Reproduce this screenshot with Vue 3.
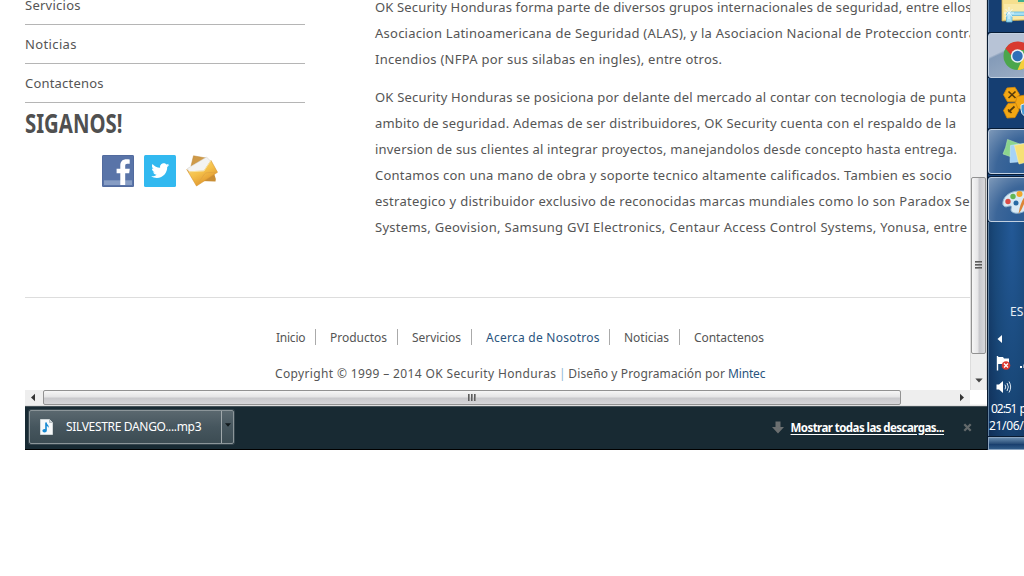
<script setup>
const sideLinks = [
  { text: 'Servicios', w: 55.5 },
  { text: 'Noticias', w: 51.5 },
  { text: 'Contactenos', w: 78.5 },
]
const paragraphs = [
  [
    { text: 'OK Security Honduras forma parte de diversos grupos internacionales de seguridad, entre ellos', w: 596.5 },
    { text: 'Asociacion Latinoamericana de Seguridad (ALAS), y la Asociacion Nacional de Proteccion contra', w: 601 },
    { text: 'Incendios (NFPA por sus silabas en ingles), entre otros.', w: 347 },
  ],
  [
    { text: 'OK Security Honduras se posiciona por delante del mercado al contar con tecnologia de punta', w: 591 },
    { text: 'ambito de seguridad. Ademas de ser distribuidores, OK Security cuenta con el respaldo de la', w: 581 },
    { text: 'inversion de sus clientes al integrar proyectos, manejandolos desde concepto hasta entrega.', w: 582 },
    { text: 'Contamos con una mano de obra y soporte tecnico altamente calificados. Tambien es socio', w: 577 },
    { text: 'estrategico y distribuidor exclusivo de reconocidas marcas mundiales como lo son Paradox Se', w: 594.5 },
    { text: 'Systems, Geovision, Samsung GVI Electronics, Centaur Access Control Systems, Yonusa, entre', w: 592 },
  ],
]
const footLinks = [
  { text: 'Inicio', w: 29.5, cell: 40 },
  { text: 'Productos', w: 57, cell: 82 },
  { text: 'Servicios', w: 49, cell: 74 },
  { text: 'Acerca de Nosotros', w: 113.5, cell: 138, blue: true },
  { text: 'Noticias', w: 45, cell: 70 },
  { text: 'Contactenos', w: 70, cell: 84 },
]

// Tracks a run of text out to the given width.
const vFit = {
  mounted(el, { value }) {
    const natural = el.getBoundingClientRect().width
    el.style.letterSpacing = (value - natural) / (el.textContent.length - 1) + 'px'
  },
}
// Condenses a run of text to the given width.
const vCondense = {
  mounted(el, { value }) {
    el.style.transform = `scaleX(${value / el.getBoundingClientRect().width})`
  },
}
</script>

<template>
  <div class="desktop">
    <div class="browser">
      <div class="viewport">
        <main class="content">
          <div class="columns">
            <aside class="side">
              <div v-for="l in sideLinks" :key="l.text" class="side-link"><span v-fit="l.w">{{ l.text }}</span></div>
              <h2><span v-condense="97.5">SIGANOS!</span></h2>
              <div class="social">
                <svg width="32" height="32" viewBox="0 0 32 32">
                  <rect width="32" height="32" rx="1.5" fill="#5974a8" />
                  <rect x=".5" y=".5" width="31" height="31" rx="1" fill="none" stroke="#526b9e" />
                  <rect x="2" y="25.3" width="28" height="4.7" fill="#879dc4" />
                  <path d="M18.3 30V18.2h-3.7v-4.5h3.7v-3.2c0-4.2 2.5-6.2 6.2-6.2 1.2 0 2.3.1 3.2.2v4.3h-2.3c-1.7 0-2.2.8-2.2 2.2v2.7h4.6l-.6 4.5h-4V30z" fill="#fff" />
                </svg>
                <svg width="32" height="32" viewBox="0 0 32 32">
                  <rect width="32" height="32" rx="1.5" fill="#32b9f0" />
                  <path transform="translate(6.6 6.2) scale(.79)" d="M23.6 4.9c-.8.4-1.700.6-2.700.8 1-.6 1.700-1.500 2.100-2.600-.9.5-1.900.9-3 1.100-.8-.9-2-1.500-3.400-1.500-3 0-5.200 2.800-4.500 5.700C8.200 8.200 4.700 6.300 2.400 3.500c-1.300 2.100-.6 4.900 1.400 6.300-.8 0-1.500-.2-2.100-.6-.1 2.200 1.500 4.200 3.700 4.700-.7.200-1.400.2-2.100.1.600 1.800 2.300 3.200 4.300 3.200-2 1.500-4.400 2.200-6.900 1.900 2.100 1.300 4.500 2.100 7.100 2.100 8.600 0 13.500-7.300 13.200-13.800 1-.6 1.900-1.500 2.600-2.500z" fill="#fff" />
                </svg>
                <svg width="32" height="32" viewBox="0 0 32 32">
                  <defs>
                    <linearGradient id="gold" x1="0" y1="0" x2=".6" y2="1">
                      <stop offset="0" stop-color="#ffe07a" /><stop offset=".55" stop-color="#f4c04a" /><stop offset="1" stop-color="#df922a" />
                    </linearGradient>
                  </defs>
                  <path d="M7.500.8 20 3 5 11z" fill="#cf9a48" stroke="#bd883a" stroke-width=".5" />
                  <path d="m27 15 2.800 9-.3 2.500L15 26z" fill="#c98e35" />
                  <path d="M1.500 13.500 20.500 2l4.500 4.500-6.500 11L3 18z" fill="#f3f3f3" stroke="#cfcac1" stroke-width=".5" />
                  <path d="M.8 14.500 3 16.800l15-.8L25 5.500l6.500 11.800L10.500 31z" fill="url(#gold)" stroke="#d69530" stroke-width=".6" />
                  <path d="m3 16.800 15-.8L25 5.500" fill="none" stroke="#fff0ae" stroke-width=".8" />
                  <path d="m10.500 30.500 8-11.500q1-1.200 3-1.300l9.500-.4" fill="none" stroke="#dfa440" stroke-width=".7" />
                </svg>
              </div>
            </aside>
            <section class="article">
              <p v-for="(p, i) in paragraphs" :key="i">
                <span v-for="l in p" :key="l.text" class="line"><span v-fit="l.w">{{ l.text }}</span></span>
              </p>
            </section>
          </div>
          <footer>
            <nav>
              <div v-for="l in footLinks" :key="l.text" class="foot-link" :class="{ blue: l.blue }" :style="{ width: l.cell + 'px' }">
                <span v-fit="l.w">{{ l.text }}</span>
              </div>
            </nav>
            <div class="copy">
              <span v-fit="281">Copyright © 1999 – 2014 OK Security Honduras</span>
              <i>|</i>
              <span v-fit="156.5">Diseño y Programación por</span>
              <b><span v-fit="37.5">Mintec</span></b>
            </div>
          </footer>
        </main>
        <div class="vscroll">
          <div class="vthumb"><i></i><i></i><i></i></div>
          <svg class="down" width="8" height="5" viewBox="0 0 8 5"><path d="M.3.5h7.400L4 4.500z" fill="#444" /></svg>
        </div>
      </div>
      <div class="hrow">
        <div class="hscroll">
          <svg width="18" height="15" viewBox="0 0 18 15"><path d="M10 3.800v7.400L6 7.500z" fill="#333" /></svg>
          <div class="hthumb"><i></i><i></i><i></i></div>
          <svg class="right" width="16" height="15" viewBox="0 0 16 15"><path d="M6 3.800v7.400l4-3.700z" fill="#333" /></svg>
        </div>
      </div>
      <div class="downloads">
        <div class="item">
          <div class="file">
            <svg width="13" height="16" viewBox="0 0 13 16">
              <path d="M.5.500h9l3 3v12H.5z" fill="#f7f9fa" stroke="#cfd6d8" /><path d="M9.500.500v3h3" fill="#cad2d6" stroke="#9faaae" stroke-width=".7" />
              <path d="M6 3.500v8" stroke="#1689d2" stroke-width="1.600" /><path d="M6 3.300c.5 2 3.300 2.500 2.700 5.700-.5-1.500-1.500-2-2.700-2.300z" fill="#1689d2" /><ellipse cx="4.600" cy="11.700" rx="2.200" ry="1.800" fill="#1689d2" />
            </svg>
            <span v-fit="135.500">SILVESTRE DANGO....mp3</span>
          </div>
          <div class="drop"><svg width="6" height="4" viewBox="0 0 6 4"><path d="M0 .3h6L3 3.700z" fill="#11191c" /></svg></div>
        </div>
        <div class="all">
          <svg width="12" height="13" viewBox="0 0 12 13"><path d="M3.500.500h5V6H12l-6 6.500L0 6h3.500z" fill="#6b6f70" /></svg>
          <span v-fit="154">Mostrar todas las descargas...</span>
          <svg class="close" width="9" height="9" viewBox="0 0 9 9"><path d="m1.300 1.300 6.400 6.400m0-6.400L1.300 7.700" stroke="#63696b" stroke-width="2.300" /></svg>
        </div>
      </div>
    </div>

    <div class="taskbar">
      <div class="task plain first">
        <svg width="36" height="33" viewBox="0 0 36 33">
          <path d="M13-2h23v22l-23 1z" fill="#f6df8e" stroke="#c9a74e" stroke-width=".8" />
          <path d="M29-1h7v3h-7z" fill="#42ad8c" /><path d="M15 4h21v15H15z" fill="#fae9a7" />
          <path d="M17.500 22V14q0-2 2-2H36v3.500H23V22z" fill="#a5dff3" stroke="#5db5dc" stroke-width=".8" />
          <path d="M20 7v12m-5-6h10m-8.500-4 7 8m0-8-7 8" stroke="#f2fcff" stroke-width=".8" />
        </svg>
      </div>
      <div class="task active chrome">
        <svg width="36" height="44" viewBox="0 0 36 44">
          <circle cx="28.500" cy="22" r="14" fill="#4ca64c" />
          <path d="M16.500 14.500A14 14 0 0 1 41.500 16h-13l-6.500 5z" fill="#d83a30" />
          <path d="m28.500 36 7-16h7a14 14 0 0 1-14 16z" fill="#f6ce3a" />
          <circle cx="28.500" cy="22" r="6.700" fill="#eef3f4" /><circle cx="28.500" cy="22" r="5.200" fill="#2f70b8" />
        </svg>
      </div>
      <div class="task plain hex">
        <svg width="36" height="50" viewBox="0 0 36 50">
          <g fill="#f3a714" stroke="#d98a09" stroke-width=".8">
            <path d="m18 10 8-.7 4.500 7.200-4 7.300h-8l-4-7z" /><path d="m19 25.500 8-.5 3 7-4 7.500-8 .5-3.500-7.500z" /><path d="m28 18.500 8-1.500v14l-7-.5-2.500-6z" />
          </g>
          <path d="m19.500 13.500 7 6.500m0-6.500-7 6.500m0 14 6-5.500m-6.500 3 3.500 3.500" stroke="#573b0a" stroke-width="1.700" />
          <path d="m32 27 4-1.500v13q-4-2.500-4-7z" fill="#4599d5" stroke="#e8f0f4" />
        </svg>
      </div>
      <div class="task active notes">
        <svg width="36" height="44" viewBox="0 0 36 44">
          <path d="m18.500 9.500 13.500 5-5 14-13-4.500q3-6 4.500-14.500z" fill="#8bd48d" stroke="#b2e5ad" stroke-width=".6" />
          <path d="m21.500 15.500 13-2 1 18-14.500 1z" fill="#a6d3f7" stroke="#c6e5fb" stroke-width=".6" />
          <path d="m25.500 15.500 10.500-2v19l-6 1.500z" fill="#f6e075" stroke="#fff0a2" stroke-width=".6" />
        </svg>
      </div>
      <div class="task active paint">
        <svg width="36" height="44" viewBox="0 0 36 44">
          <path d="M14 27c-1.500-7 6-14 16-14h6v20c-7 4-14 2-14-1 0-2.500 1.500-4-1-4-3 0-4 2.500-7-1z" fill="#d9eaf4" stroke="#90b5cf" />
          <circle cx="19" cy="23.500" r="2.700" fill="#da4c46" /><circle cx="24" cy="18.500" r="2.700" fill="#63b755" /><circle cx="30.500" cy="16" r="3" fill="#f1a62d" /><circle cx="27" cy="25" r="2.500" fill="#286ba4" />
          <path d="M36 18q-5 7-6.500 18 4-5 6.500-13z" fill="#dd8537" />
        </svg>
      </div>
      <div class="tray">
        <div class="lang">ES</div>
        <svg class="more" width="6" height="8" viewBox="0 0 6 8"><path d="M5 0v8L.5 4z" fill="#fff" /></svg>
        <svg class="flag" width="30" height="17" viewBox="0 0 30 17">
          <path d="M1.500 1v14.500" stroke="#fff" stroke-width="1.400" /><path d="M2 2h5l1 1.500h5v7H8L7 9H2z" fill="#fff" />
          <circle cx="10" cy="10.500" r="4.300" fill="#dc3931" /><path d="m8 8.500 4 4m0-4-4 4" stroke="#fff" stroke-width="1.300" />
          <path d="M24 11h2v2h-2zm3.500-1.500H29V13h-1.500z" fill="#fff" />
        </svg>
        <svg class="sound" width="16" height="14" viewBox="0 0 16 14">
          <path d="M.5 4.500H3L7 1v12L3 9.500H.5z" fill="#fff" /><path d="M9 4.700q1.500 2.300 0 4.600m2-6.300q2.700 4 0 8m2-9.500q3.300 5.500 0 11" fill="none" stroke="#d9e5ef" />
        </svg>
        <div class="clock"><span v-fit="26.5">02:51</span>&nbsp;<span>p.m.</span></div>
        <div class="date"><span v-fit="61">21/06/2014</span></div>
      </div>
      <div class="peek"></div>
    </div>
  </div>
</template>

<style>
html, body { background: #fff; overflow: hidden; }
</style>

<style scoped>
* { box-sizing: border-box; }
svg { display: block; flex: none; }
span { display: inline-block; white-space: nowrap; }
.desktop { display: flex; width: 1024px; height: 450px; padding-left: 25px; overflow: hidden; font-family: "Noto Sans", "Open Sans", sans-serif; }
.browser { width: 962px; flex: none; display: flex; flex-direction: column; }
.viewport { display: flex; height: 390px; }
.content { width: 945px; flex: none; height: 390px; overflow: hidden; color: #555; }
.columns { display: flex; gap: 70px; height: 297px; font-size: 13px; }
.side { width: 280px; flex: none; margin-top: -14px; }
.side-link { height: 39px; line-height: 38px; border-bottom: 1px solid #b5b5b5; }
h2 { margin: 0; height: 41px; line-height: 39px; font-size: 27px; font-weight: 700; color: #505050; }
h2 span { transform-origin: 0 50%; }
.social { display: flex; gap: 10px; padding: 11px 0 0 77px; }
.article { flex: none; margin-top: -6px; }
p { margin: 0 0 12px; }
.line { display: block; height: 26px; line-height: 26px; }
footer { border-top: 1px solid #ddd; height: 93px; padding-top: 31px; font-size: 12px; }
nav { display: flex; padding-left: 251px; }
.foot-link { height: 16px; line-height: 17px; border-right: 1px solid #aaa; padding-left: 14px; }
.foot-link:first-child { padding-left: 0; }
.foot-link:last-child { border-right: 0; }
.blue, .copy b { color: #2b557e; }
.copy { display: flex; padding-left: 250px; margin-top: 20px; line-height: 18px; }
.copy b { font-weight: 400; margin-left: 3px; }
.copy i { width: 12px; text-align: center; font-style: normal; color: #8fb9d5; }
.vscroll { width: 17px; height: 390px; background: linear-gradient(90deg, #ddd 1px, #eee 1px 16px, #d5d5d5 16px); padding: 177px 1px 0; }
.vthumb { width: 15px; height: 177px; border: 1px solid #929292; border-radius: 2px; background: linear-gradient(90deg, #f6f6f6, #e5e5e7 45%, #c8c8cc 55%, #d8d8db); display: flex; flex-direction: column; align-items: center; justify-content: center; gap: 1px; padding-bottom: 2px; }
.vthumb i { width: 7px; height: 2px; background: linear-gradient(#444, #aaa); }
.down { margin: 24px 0 0 4px; }
.hrow { height: 16px; background: linear-gradient(#fff 14px, #ddd); }
.hscroll { display: flex; width: 945px; height: 16px; background: #eee; border-bottom: 1px solid #e0e0e0; }
.hthumb { width: 858px; height: 15px; border: 1px solid #929292; border-radius: 2px; background: linear-gradient(#f6f6f6, #e5e5e6 45%, #c9c9cc 55%, #d6d6d9); display: flex; align-items: center; justify-content: center; gap: 1px; }
.hthumb i { width: 2px; height: 7px; background: linear-gradient(90deg, #444, #aaa); }
.right { margin-left: 53px; }
.downloads { height: 44px; background: #182a33; border-top: 1px solid #46535a; border-bottom: 1px solid #000; display: flex; justify-content: space-between; padding: 3px 15px 0 4px; color: #fff; font-size: 12px; }
.item { display: flex; width: 205px; height: 34px; border: 1px solid #8b9599; border-radius: 2px; background: linear-gradient(#5a686f, #46565e 50%, #3c4c53); box-shadow: 0 0 0 1px #35454d; }
.file { display: flex; align-items: center; width: 192px; padding-left: 10px; gap: 13px; border-right: 1px solid #a0a8ab; }
.file span { line-height: 18px; margin-top: -1px; }
.drop { width: 11px; padding: 12px 0 0 3px; }
.all { display: flex; align-items: center; height: 35px; }
.all span { margin: 0 19px 0 7px; font-size: 11.5px; line-height: 14px; font-weight: 700; text-decoration: underline; text-underline-offset: 2px; }
.taskbar { width: 37px; flex: none; height: 450px; border-left: 1px solid #091b31; background: linear-gradient(135deg, #173e70, #245895); display: flex; flex-direction: column; overflow: hidden; }
.task { flex: none; width: 40px; overflow: hidden; border-left: 1px solid #587da5; }
.plain { background: #153e72; }
.first { height: 32px; }
.hex { height: 50px; }
.active { height: 45px; margin-top: 1px; border: 1px solid #c1d0e1; border-radius: 3px 0 0 3px; background: radial-gradient(ellipse at 100% 100%, #2f5e95 25%, #3c6699 58%, #7e99b9 100%); box-shadow: 0 0 0 1px #071c36; }
.chrome { background: linear-gradient(155deg, #b7c3d6 38%, #849bb8 42%, #9aacc4); }
.paint { margin-top: 3px; }
.tray { flex: none; height: 214px; border-left: 1px solid #60809f; color: #fff; font-size: 12px; background: radial-gradient(ellipse at 65% 0, #235997, #194879 55%, #102f58); }
.lang { padding: 80px 0 0 21px; line-height: 20px; color: #e7edf4; }
.more { margin: 13px 0 0 8px; }
.flag { margin: 12px 0 0 7px; }
.sound { margin: 8px 0 0 7px; }
.clock { display: flex; margin: 6px 0 0 2px; height: 17px; line-height: 17px; white-space: nowrap; }
.date { height: 17px; line-height: 17px; }
.peek { flex: 1; margin-top: 1px; border: 1px solid #8ba5c0; border-right: 0; background: linear-gradient(#668aad, #2a4f79 50%, #173d6c 55%, #315c89); box-shadow: 0 -1px 0 #091b31; }
</style>
